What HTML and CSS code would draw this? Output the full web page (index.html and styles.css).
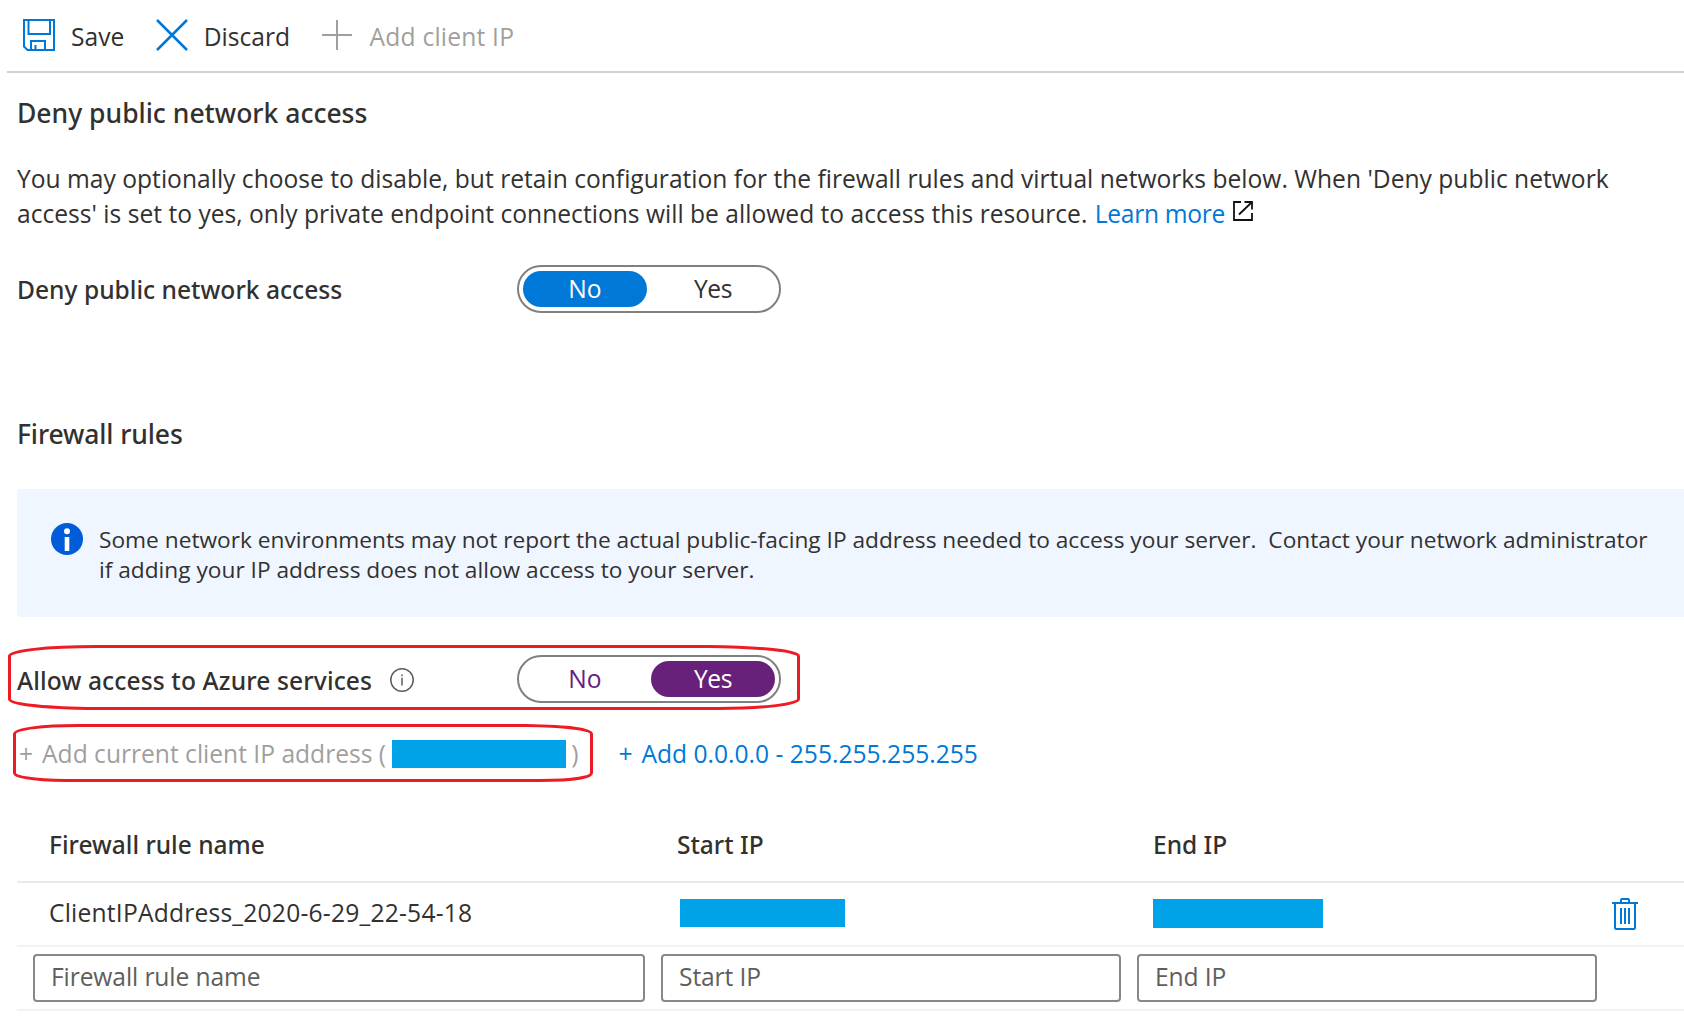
FILE: index.html
```
<!DOCTYPE html>
<html lang="en">
<head>
<meta charset="utf-8">
<title>Firewall settings</title>
<link rel="stylesheet" href="styles.css">
</head>
<body>
<header class="toolbar">
  <button class="command" type="button">
    <svg class="command-icon" width="32" height="32" viewBox="0 0 32 32" fill="none" stroke="#0078d7" stroke-width="2">
      <path d="M1 1H31V31H4.500L1 27.500Z"/>
      <path d="M5.500 1V15H27V1"/>
      <path d="M8 31V22H22V31"/>
      <path d="M12.500 31V26"/>
    </svg>
    <span>Save</span>
  </button>
  <button class="command" type="button">
    <svg class="command-icon" width="32" height="32" viewBox="0 0 32 32" fill="none" stroke="#0078d7" stroke-width="2.500">
      <path d="M1 1L31 31M31 1L1 31"/>
    </svg>
    <span>Discard</span>
  </button>
  <button class="command command-disabled" type="button">
    <svg class="command-icon" width="30" height="30" viewBox="0 0 30 30" fill="none" stroke="#a19f9d" stroke-width="2">
      <path d="M0 15H30M15 0V30"/>
    </svg>
    <span>Add client IP</span>
  </button>
</header>

<main class="content">
  <h2 class="title">Deny public network access</h2>
  <p class="description">You may optionally choose to disable, but retain configuration for the firewall rules and virtual networks below. When 'Deny public network<br>access' is set to yes, only private endpoint connections will be allowed to access this resource. <a class="link learn-more">Learn more</a><svg class="external" width="20" height="20" viewBox="0 0 20 20" fill="none" stroke="#111" stroke-width="1.800"><path d="M8 1H1V19H19V12"/><path d="M11.500 1H19V8.500M19 1L6 13.500"/></svg></p>

  <div class="setting deny-setting">
    <span class="setting-label">Deny public network access</span>
    <div class="toggle">
      <span class="option option-blue">No</span>
      <span class="option option-yes">Yes</span>
    </div>
  </div>

  <h2 class="title rules-title">Firewall rules</h2>
  <div class="notice">
    <svg class="notice-icon" width="32" height="32" viewBox="0 0 32 32">
      <circle cx="16" cy="16" r="16" fill="#015cda"/>
      <circle cx="16" cy="8.300" r="3" fill="#fff"/>
      <rect x="13.700" y="14" width="4.600" height="14" fill="#fff"/>
    </svg>
    <p class="notice-text">Some network environments may not report the actual public-facing IP address needed to access your server.&nbsp; Contact your network administrator<br>if adding your IP address does not allow access to your server.</p>
  </div>

  <div class="setting allow-setting">
    <span class="setting-label">Allow access to Azure services
      <svg class="hint" width="24" height="24" viewBox="0 0 24 24" fill="none" stroke="#605e5c" stroke-width="1.500">
        <circle cx="12" cy="12" r="11.200"/>
        <path d="M12 9.800V17.500M12 6.500V8.300"/>
      </svg>
    </span>
    <div class="toggle">
      <span class="option option-purple-text">No</span>
      <span class="option option-yes option-purple">Yes</span>
    </div>
  </div>

  <div class="quick-add">
    <span class="add-current"><span class="plus">+</span>Add current client IP address (<span class="redacted redacted-client"></span>)</span>
    <a class="link add-range"><span class="plus">+</span>Add 0.0.0.0 - 255.255.255.255</a>
  </div>

  <div class="rules">
    <div class="rule-row rule-head">
      <span class="cell">Firewall rule name</span>
      <span class="cell">Start IP</span>
      <span class="cell">End IP</span>
    </div>
    <div class="rule-row rule-item">
      <span class="cell rule-name">ClientIPAddress_2020-6-29_22-54-18</span>
      <span class="redacted redacted-start"></span>
      <span class="redacted redacted-end"></span>
      <svg class="trash" width="26" height="32" viewBox="0 0 26 32" fill="none" stroke="#0078d7" stroke-width="2">
        <path d="M0 5H26"/>
        <path d="M9 5V2Q9 1 10 1H16Q17 1 17 2V5"/>
        <path d="M3 5V29.500Q3 31 4.500 31H21.500Q23 31 23 29.500V5"/>
        <path d="M9 10V26M13 10V26M17 10V26"/>
      </svg>
    </div>
    <div class="rule-row rule-new">
      <input class="field" type="text" placeholder="Firewall rule name">
      <input class="field" type="text" placeholder="Start IP">
      <input class="field" type="text" placeholder="End IP">
    </div>
  </div>
</main>

<svg class="markup" width="1684" height="1022" viewBox="0 0 1684 1022" fill="none" stroke="#ed1c24" stroke-width="3">
  <path d="M9.500 656C9.500 651 45 646.500 97 646.500H708C760 647 798.500 651 798.500 656V699C798.500 704 765 708.500 719 708.500H87C40 707.500 9.500 704 9.500 699Z"/>
  <path d="M14.500 734C14.500 729 42 725.500 78 725.500H526C562 726 591.500 729 591.500 734V773C591.500 777 575 780.500 540 780.500H66C32 780 14.500 777 14.500 773Z"/>
</svg>
</body>
</html>
```
FILE: styles.css
```
* {
  box-sizing: border-box;
}

body {
  margin: 0;
  height: 1022px;
  overflow: hidden;
  background: #fff;
  color: #323130;
  font-family: "Open Sans", "Noto Sans", sans-serif;
  font-size: 24.6px;
  line-height: 35px;
}

h2,
p {
  margin: 0;
}

.toolbar {
  display: flex;
  align-items: center;
  gap: 31.500px;
  height: 73px;
  margin-left: 7px;
  padding: 2px 0 0 16px;
  border-bottom: 2px solid #d2d2d2;
}

.command {
  display: flex;
  align-items: center;
  gap: 16px;
  padding: 0;
  border: 0;
  background: none;
  color: inherit;
  font: inherit;
  white-space: nowrap;
}

.command-icon {
  flex: none;
  margin-bottom: 3px;
}

.command-disabled {
  gap: 18px;
  color: #a19f9d;
  letter-spacing: 0.2px;
}

.content {
  padding: 23px 0 0 17px;
}

.title {
  font: 500 26.5px/35px "Noto Sans", "Open Sans", sans-serif;
}

.description {
  margin-top: 30px;
  letter-spacing: 0.01px;
  white-space: nowrap;
}

.link {
  color: #0078d7;
}

.learn-more {
  margin-left: 1px;
  letter-spacing: -0.3px;
}

.external {
  margin-left: 8px;
  vertical-align: 2px;
}

.setting {
  display: flex;
  align-items: center;
  height: 48px;
}

.deny-setting {
  margin-top: 34px;
}

.allow-setting {
  margin-top: 38px;
}

.setting-label {
  display: flex;
  align-items: center;
  gap: 18px;
  width: 500px;
  font: 500 24.6px/35px "Noto Sans", "Open Sans", sans-serif;
}

.allow-setting .setting-label {
  padding-top: 2px;
  letter-spacing: 0.12px;
}

.toggle {
  display: flex;
  gap: 4px;
  width: 264px;
  height: 48px;
  padding: 4px;
  border: 2px solid #808080;
  border-radius: 24px;
}

.option {
  flex: 1;
  border-radius: 18px;
  text-align: center;
}

.option-yes {
  letter-spacing: -0.5px;
}

.option-blue {
  background: #0078d7;
  color: #fff;
}

.option-purple-text {
  color: #68217a;
}

.option-purple {
  background: #68217a;
  color: #fff;
}

.rules-title {
  margin-top: 104px;
  letter-spacing: -0.12px;
}

.notice {
  display: flex;
  gap: 16px;
  height: 128px;
  margin-top: 37px;
  padding: 34px 0 0 34px;
  border-radius: 4px 0 0 4px;
  background: #eff6ff;
}

.notice-icon {
  flex: none;
}

.notice-text {
  padding-top: 2px;
  font-size: 22.7px;
  line-height: 30px;
  white-space: nowrap;
}

.quick-add {
  display: flex;
  gap: 40px;
  margin: 33px 0 0 2px;
  white-space: nowrap;
}

.add-current {
  display: flex;
  align-items: center;
  color: #a19f9d;
}

.plus {
  margin-right: 9px;
}

.add-range {
  letter-spacing: 0;
}

.redacted {
  height: 28px;
  background: #00a2e8;
}

.redacted-client {
  width: 174px;
  margin: 1px 5px 0 6px;
}

.rules {
  margin-top: 56px;
}

.rule-row {
  display: grid;
  grid-template-columns: 612px 460px 460px 26px;
  column-gap: 16px;
  align-items: center;
  padding-left: 16px;
  border-bottom: 2px solid #f2f2f2;
}

.rule-head {
  padding-bottom: 19px;
  border-color: #eaeaea;
  font: 500 24.5px/35px "Noto Sans", "Open Sans", sans-serif;
}

.cell {
  padding-left: 16px;
}

.rule-item {
  height: 64px;
  padding-bottom: 2px;
}

.rule-name {
  padding-bottom: 2px;
  letter-spacing: 0.21px;
}

.redacted-start {
  width: 165px;
  margin-left: 19px;
}

.redacted-end {
  width: 170px;
  height: 29px;
  margin-left: 16px;
}

.trash {
  margin: 2px 0 0 -1px;
}

.rule-new {
  padding-top: 7px;
  padding-bottom: 7px;
}

.field {
  width: 100%;
  height: 48px;
  padding: 0 16px 4px;
  border: 2px solid #8a8886;
  border-radius: 4px;
  background: #fff;
  color: inherit;
  font: inherit;
  letter-spacing: -0.1px;
}

.field::placeholder {
  color: #605e5c;
}

/* Hand-drawn red outlines laid over the page */
.markup {
  position: absolute;
  top: 0;
  left: 0;
  pointer-events: none;
}
```
